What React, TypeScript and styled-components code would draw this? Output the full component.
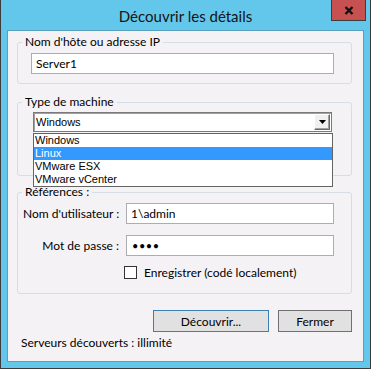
import styled, { createGlobalStyle } from "styled-components";

const GlobalStyle = createGlobalStyle`
  html, body {
    margin: 0;
    padding: 0;
  }
  body {
    font-family: Lato, "Open Sans", sans-serif;
    font-size: 12px;
    color: #000;
  }
`;

const Window = styled.div`
  width: 371px;
  height: 369px;
  box-sizing: border-box;
  background: #62c7eb;
  border: 1px solid #3c3c3c;
  border-top: none;
  display: flex;
  flex-direction: column;
`;

const TitleBar = styled.div`
  position: relative;
  height: 30px;
  display: flex;
  align-items: center;
  justify-content: center;
  font-size: 15px;
  color: #141414;
  padding-top: 1px;
  box-sizing: border-box;
`;

const CloseBtn = styled.div`
  position: absolute;
  top: 0;
  right: 4px;
  width: 35px;
  height: 21px;
  box-sizing: border-box;
  background: #c75050;
  border: 1px solid #3c3c3c;
  border-top: none;
  display: flex;
  align-items: center;
  justify-content: center;
`;

const Client = styled.div`
  flex: 1;
  margin: 0 6px 6px;
  background: #f5f2f5;
  border: 1px solid #5a9fbb;
  padding: 3px 11px 0 9px;
  display: flex;
  flex-direction: column;
`;

const Group = styled.fieldset<{ top: number }>`
  margin: ${(p) => p.top}px 0 0;
  padding: 0;
  min-width: 0;
  border: 1px solid #d5dde5;
  border-radius: 3px;
`;

const Legend = styled.legend`
  margin-left: 4px;
  padding: 0 3px;
  line-height: 16px;
  font-size: 12px;
`;

const GroupBody = styled.div<{ pad: string }>`
  padding: ${(p) => p.pad};
`;

const TextBox = styled.input`
  display: block;
  width: 100%;
  height: 21px;
  box-sizing: border-box;
  margin: 0;
  border: 1px solid #abadb3;
  background: #fff;
  padding: 0 4px;
  font-family: Lato, "Open Sans", sans-serif;
  font-size: 12px;
  color: #000;
  outline: none;
`;

const PasswordBox = styled(TextBox)`
  letter-spacing: 0.5px;
  font-size: 11px;
  padding-left: 5px;
`;

const ComboWrap = styled.div`
  position: relative;
`;

const Combo = styled.div`
  height: 20px;
  box-sizing: border-box;
  border: 1px solid #7a7a7a;
  box-shadow: inset 1px 1px 0 #a0a0a0;
  background: #fff;
  display: flex;
  align-items: center;
  padding-left: 2px;
  font-family: "Liberation Sans", Arial, sans-serif;
  font-size: 11px;
`;

const ComboText = styled.span`
  flex: 1;
`;

const DropBtn = styled.div`
  width: 16px;
  height: 16px;
  margin-right: 1px;
  box-sizing: border-box;
  background: #f0f0f0;
  border: 1px solid;
  border-color: #fff #696969 #696969 #fff;
  box-shadow: inset -1px -1px 0 #a0a0a0;
  display: flex;
  align-items: center;
  justify-content: center;
`;

const DropList = styled.ul`
  position: absolute;
  z-index: 2;
  top: 21px;
  left: 0;
  width: 300px;
  margin: 0;
  padding: 0;
  list-style: none;
  box-sizing: border-box;
  border: 1px solid #646464;
  background: #fff;
  font-family: "Liberation Sans", Arial, sans-serif;
  font-size: 11px;
`;

const DropItem = styled.li<{ selected?: boolean }>`
  height: 13px;
  line-height: 13px;
  padding-left: 1px;
  background: ${(p) => (p.selected ? "#3399ff" : "#fff")};
  color: ${(p) => (p.selected ? "#fff" : "#000")};
`;

const FormGrid = styled.div`
  display: grid;
  grid-template-columns: 96px 1fr;
  column-gap: 7px;
  row-gap: 11px;
  align-items: center;
`;

const FieldLabel = styled.label`
  text-align: right;
  line-height: 16px;
  white-space: nowrap;
`;

const CheckRow = styled.label`
  grid-column: 2;
  margin: -3px 0 0 -2px;
  height: 16px;
  display: flex;
  align-items: center;
  gap: 7px;
`;

const CheckBox = styled.span`
  width: 13px;
  height: 13px;
  box-sizing: border-box;
  border: 1px solid #333;
  background: #fff;
`;

const ButtonRow = styled.div`
  margin-top: 16px;
  display: flex;
  justify-content: flex-end;
  gap: 9px;
`;

const Button = styled.button<{ w: number; primary?: boolean }>`
  width: ${(p) => p.w}px;
  height: 22px;
  margin: 0;
  padding: 0;
  box-sizing: border-box;
  background: #e1e1e1;
  border: 1px solid ${(p) => (p.primary ? "#3c7fb1" : "#707070")};
  font-family: Lato, "Open Sans", sans-serif;
  font-size: 12px;
  color: #000;
`;

const Footer = styled.div`
  margin: 3px 0 0 4px;
  line-height: 16px;
`;

const App = () => {
  return (
    <>
      <GlobalStyle />
      <Window>
        <TitleBar>
          Découvrir les détails
          <CloseBtn>
            <svg width="10" height="9" viewBox="0 0 10 9">
              <path d="M1.5 1 L8.5 8 M8.5 1 L1.5 8" stroke="#111" strokeWidth="2.4" />
            </svg>
          </CloseBtn>
        </TitleBar>
        <Client>
          <Group top={0}>
            <Legend>Nom d'hôte ou adresse IP</Legend>
            <GroupBody pad="3px 17px 9px 13px">
              <TextBox defaultValue="Server1" />
            </GroupBody>
          </Group>

          <Group top={10}>
            <Legend>Type de machine</Legend>
            <GroupBody pad="2px 19px 43px 15px">
              <ComboWrap>
                <Combo>
                  <ComboText>Windows</ComboText>
                  <DropBtn>
                    <svg width="7" height="4" viewBox="0 0 7 4">
                      <path d="M0 0 H7 L3.5 4 Z" fill="#000" />
                    </svg>
                  </DropBtn>
                </Combo>
                <DropList>
                  <DropItem>Windows</DropItem>
                  <DropItem selected>Linux</DropItem>
                  <DropItem>VMware ESX</DropItem>
                  <DropItem>VMware vCenter</DropItem>
                </DropList>
              </ComboWrap>
            </GroupBody>
          </Group>

          <Group top={8}>
            <Legend>Références :</Legend>
            <GroupBody pad="3px 17px 13px 5px">
              <FormGrid>
                <FieldLabel>Nom d'utilisateur :</FieldLabel>
                <TextBox defaultValue="1\admin" />
                <FieldLabel>Mot de passe :</FieldLabel>
                <PasswordBox type="password" defaultValue="abcd" />
                <CheckRow>
                  <CheckBox />
                  Enregistrer (codé localement)
                </CheckRow>
              </FormGrid>
            </GroupBody>
          </Group>

          <ButtonRow>
            <Button w={116} primary>
              Découvrir...
            </Button>
            <Button w={74}>Fermer</Button>
          </ButtonRow>

          <Footer>Serveurs découverts : illimité</Footer>
        </Client>
      </Window>
    </>
  );
};

export default App;
